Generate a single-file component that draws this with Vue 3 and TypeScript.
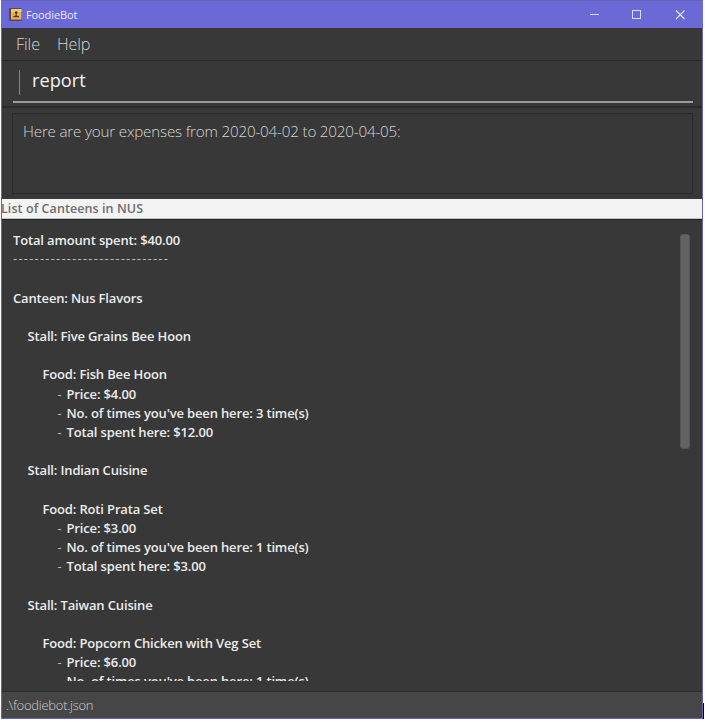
<script setup lang="ts">
interface ReportLine {
  text: string
  level: number
  bullet?: boolean
  rule?: boolean
}

const menus: string[] = ['File', 'Help']

const lines: ReportLine[] = [
  { text: 'Total amount spent: $40.00', level: 0 },
  { text: '-----------------------------', level: 0, rule: true },
  { text: '', level: 0 },
  { text: 'Canteen: Nus Flavors', level: 0 },
  { text: '', level: 0 },
  { text: 'Stall: Five Grains Bee Hoon', level: 1 },
  { text: '', level: 0 },
  { text: 'Food: Fish Bee Hoon', level: 2 },
  { text: 'Price: $4.00', level: 3, bullet: true },
  { text: "No. of times you've been here: 3 time(s)", level: 3, bullet: true },
  { text: 'Total spent here: $12.00', level: 3, bullet: true },
  { text: '', level: 0 },
  { text: 'Stall: Indian Cuisine', level: 1 },
  { text: '', level: 0 },
  { text: 'Food: Roti Prata Set', level: 2 },
  { text: 'Price: $3.00', level: 3, bullet: true },
  { text: "No. of times you've been here: 1 time(s)", level: 3, bullet: true },
  { text: 'Total spent here: $3.00', level: 3, bullet: true },
  { text: '', level: 0 },
  { text: 'Stall: Taiwan Cuisine', level: 1 },
  { text: '', level: 0 },
  { text: 'Food: Popcorn Chicken with Veg Set', level: 2 },
  { text: 'Price: $6.00', level: 3, bullet: true },
  { text: "No. of times you've been here: 1 time(s)", level: 3, bullet: true },
]
</script>

<template>
  <div class="desktop">
    <div class="window">
      <header class="titlebar">
        <svg class="app-icon" width="13" height="13" viewBox="0 0 13 13">
          <rect x="0" y="0" width="13" height="13" rx="1" fill="#5d4a3c" />
          <rect x="2" y="1" width="10.5" height="10.5" fill="#e9b158" />
          <rect x="2" y="1" width="10.5" height="3" fill="#f3c87c" />
          <circle cx="7.2" cy="4.6" r="1.4" fill="#4a3a26" />
          <path d="M6.700 5.500h1v1.900l2.300 0.500v1.300H4.400V7.900l2.300-.5z" fill="#4a3a26" />
        </svg>
        <span class="title">FoodieBot</span>
        <div class="controls">
          <svg width="43" height="26" viewBox="0 0 43 26"><path d="M17 12.5h9" stroke="#dedcf8" fill="none" /></svg>
          <svg width="43" height="26" viewBox="0 0 43 26"><rect x="16.5" y="8.5" width="8" height="8" stroke="#dedcf8" fill="none" /></svg>
          <svg width="43" height="26" viewBox="0 0 43 26"><path d="M17 8.5l8.5 8.5M25.500 8.500L17 17" stroke="#e6e5fa" stroke-width="1.1" fill="none" /></svg>
        </div>
      </header>
      <nav class="menubar">
        <span v-for="m in menus" :key="m" class="menu">{{ m }}</span>
      </nav>
      <section class="command">
        <div class="field"><i class="marker"></i><span class="entry">report</span></div>
      </section>
      <section class="result">
        <div class="result-box"><span class="result-text">Here are your expenses from 2020-04-02 to 2020-04-05:</span></div>
      </section>
      <div class="heading"><span>List of Canteens in NUS</span></div>
      <main class="report">
        <div class="lines">
          <div v-for="(l, i) in lines" :key="i" class="line" :class="['level-' + l.level, { rule: l.rule }]">
            <span v-if="l.bullet" class="bullet">-</span><span>{{ l.text }}</span>
          </div>
        </div>
        <div class="track"><div class="thumb"></div></div>
      </main>
      <footer class="status">.\foodiebot.json</footer>
    </div>
    <div class="edge"></div>
  </div>
</template>

<style>
body {
  background: #fff;
}
</style>

<style scoped>
.desktop {
  display: flex;
  align-items: flex-end;
  width: 704px;
  height: 719px;
  padding-left: 1px;
  overflow: hidden;
  font-family: 'Open Sans', 'Noto Sans', sans-serif;
}
.desktop,
.desktop * {
  box-sizing: border-box;
}
.window {
  display: flex;
  flex-direction: column;
  flex: none;
  width: 702px;
  height: 719px;
  border: 1px solid #6663b4;
  background: #383838;
}
.edge {
  width: 1px;
  height: 16px;
  background: #000;
}
.titlebar {
  display: flex;
  align-items: center;
  flex: none;
  height: 27px;
  margin: 0 -1px;
  padding: 0 1px 0 8px;
  background: #6b69d6;
}
.app-icon {
  flex: none;
}
.title {
  margin-left: 4px;
  color: #e9e8fb;
  font-size: 11px;
  letter-spacing: -0.1px;
}
.controls {
  display: flex;
  margin-left: auto;
}
.menubar {
  display: flex;
  align-items: center;
  gap: 17px;
  flex: none;
  height: 33px;
  padding: 0 14px;
  border-bottom: 1px solid #2b2b2b;
  color: #d6d6d6;
  font-size: 16.2px;
  font-weight: 300;
  letter-spacing: -0.1px;
}
.command {
  flex: none;
  height: 47px;
  padding: 4px 9px 0 11px;
  border-bottom: 2px solid #2b2b2b;
}
.field {
  display: flex;
  align-items: center;
  height: 38px;
  padding: 0 0 2px 6px;
  border-bottom: 2px solid #9c9c9c;
}
.marker {
  width: 1px;
  height: 25px;
  background: #858585;
}
.entry {
  margin: 0 0 4px 12px;
  color: #f2f2f2;
  font-size: 18.2px;
  line-height: 24px;
}
.result {
  flex: none;
  height: 91px;
  padding: 5px 9px 5px 10px;
}
.result-box {
  height: 81px;
  padding: 5px 11px 5px 10px;
  border: 1px solid #2b2b2b;
  color: #d6d6d6;
  font-size: 15.2px;
  font-weight: 300;
  letter-spacing: -0.19px;
  line-height: 24px;
  white-space: nowrap;
}
.heading {
  flex: none;
  height: 20px;
  border-bottom: 1px solid #bcc2bd;
  background: #f3f3f3;
  color: #6d6d6d;
  font-size: 12.5px;
  font-weight: 600;
  letter-spacing: 0.08px;
  line-height: 20px;
}
.heading span {
  margin-left: -1px;
}
.report {
  display: flex;
  justify-content: space-between;
  flex: 1;
  min-height: 0;
  padding: 11px 12px 10px 11px;
  border-top: 1px solid #252525;
}
.lines {
  flex: 1;
  overflow: hidden;
  color: #ececec;
  font-size: 13px;
  font-weight: 600;
  letter-spacing: -0.15px;
}
.line {
  height: 19.2px;
  line-height: 19.2px;
  white-space: pre;
}
.level-1 {
  padding-left: 14.5px;
}
.level-2 {
  padding-left: 29.5px;
}
.level-3 {
  padding-left: 44.5px;
}
.bullet {
  display: inline-block;
  width: 9px;
  color: #b8b8b8;
  font-weight: 400;
}
.rule {
  color: #bbb;
  font-weight: 400;
  letter-spacing: 1.2px;
  line-height: 17.2px;
}
.track {
  width: 10px;
  padding-top: 3px;
}
.thumb {
  width: 10px;
  height: 215px;
  border: 1px solid #555;
  border-radius: 3px;
  background: #636363;
}
.status {
  flex: none;
  height: 27px;
  padding-left: 4px;
  border-top: 1px solid #2c2c2c;
  background: #464646;
  color: #d0d0d0;
  font-size: 13px;
  font-weight: 300;
  letter-spacing: -0.27px;
  line-height: 27px;
}
</style>
